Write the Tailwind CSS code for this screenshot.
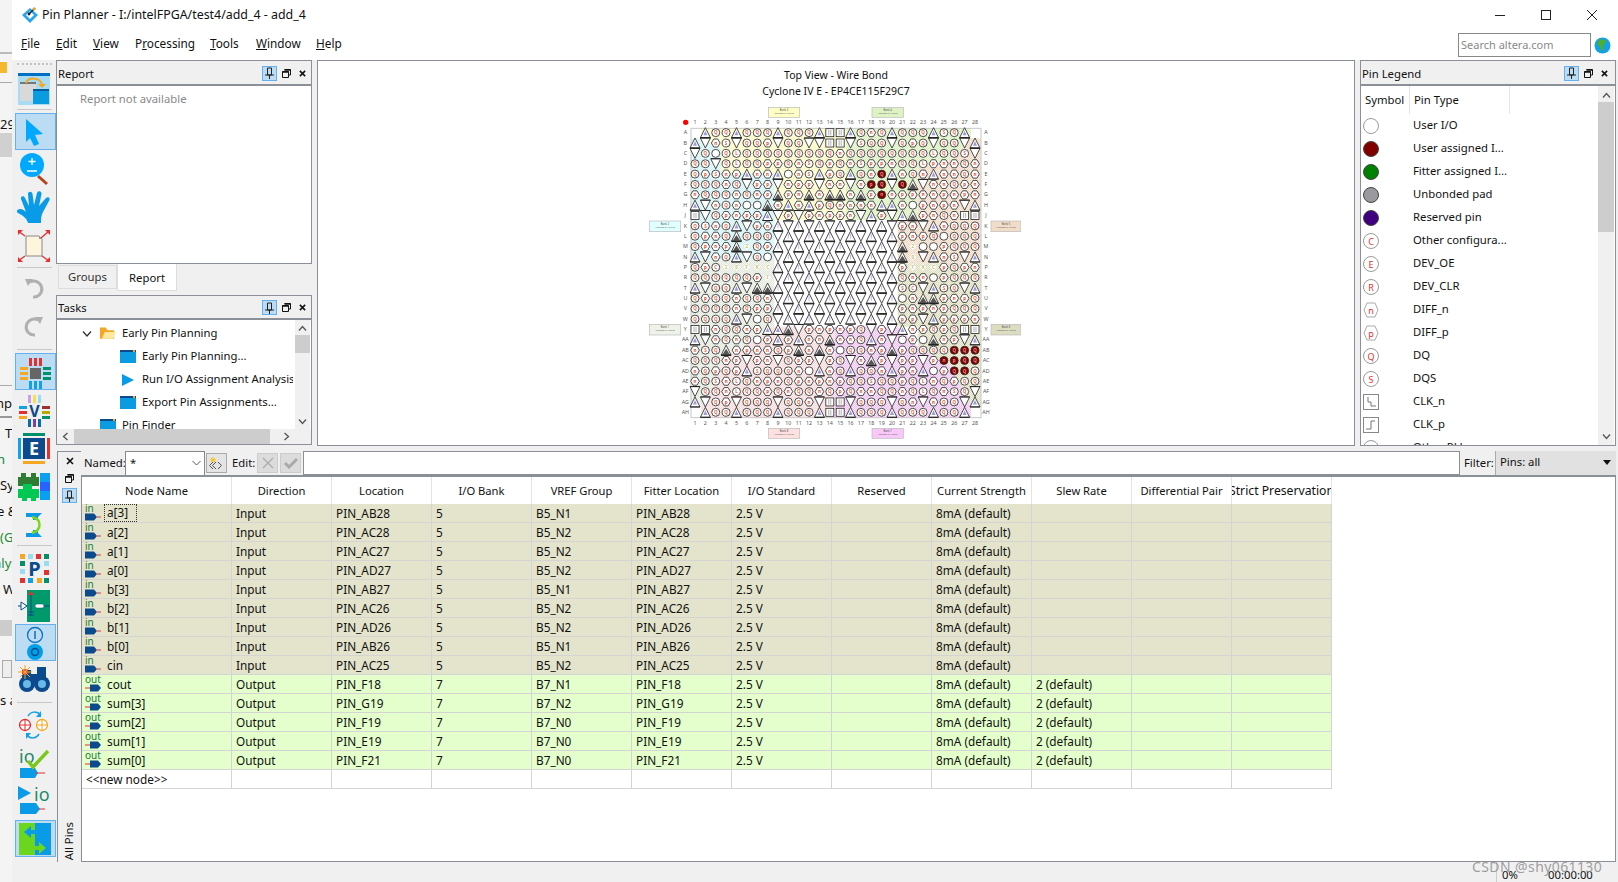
<!DOCTYPE html>
<html lang="en">
<head>
<meta charset="UTF-8">
<title>Pin Planner</title>
<script src="https://cdn.jsdelivr.net/npm/@tailwindcss/browser@4"></script>
</head>
<body class="w-[1618px] h-[882px] overflow-hidden bg-[#f0f0f0] text-[11.3px] text-[#111] font-['Noto_Sans',sans-serif]">
<div class="flex h-[882px]">

  <!-- window behind, only a sliver shows -->
  <div class="relative w-[12px] h-full overflow-hidden bg-[#f4f4f4] text-[13px] whitespace-nowrap">
    <div class="absolute left-0 top-[52px] w-full h-[2px] bg-[#bbb]"></div>
    <div class="absolute left-[-5px] top-[62px] w-[12px] h-[11px] bg-[#f5b82e]"></div>
    <div class="absolute left-0 top-[82px] w-full h-[1px] bg-[#aaa]"></div>
    <div class="absolute left-0 top-[115px]">29</div>
    <div class="absolute left-0 top-[133px] w-full h-[24px] bg-[#d0d0d0]"></div>
    <div class="absolute left-0 top-[385px] w-full h-[1px] bg-[#aaa]"></div>
    <div class="absolute left-[-4px] top-[394px]">np</div>
    <div class="absolute left-0 top-[416px] w-full h-[2px] bg-[#999]"></div>
    <div class="absolute left-[5px] top-[424px]">T</div>
    <div class="absolute left-[-3px] top-[450px] text-[#0a8a3a]">n</div>
    <div class="absolute left-0 top-[476px]">Sy</div>
    <div class="absolute left-[-3px] top-[502px]">e &amp;</div>
    <div class="absolute left-0 top-[528px] text-[#1a8a3a]">(G</div>
    <div class="absolute left-[-6px] top-[554px] text-[#1a8a3a]">alys</div>
    <div class="absolute left-[3px] top-[580px]">W</div>
    <div class="absolute left-0 top-[620px] w-full h-[16px] bg-[#ccc]"></div>
    <div class="absolute left-[2px] top-[660px] w-[10px] h-[18px] border border-[#aaa] bg-[#eee]"></div>
    <div class="absolute left-0 top-[691px]">s a</div>
  </div>

  <div class="flex-1 flex flex-col shadow-[-1px_0_2px_rgba(0,0,0,0.12)]">
    <!-- title bar -->
    <div class="h-[30px] bg-white flex items-center">
      <svg class="ml-[9px] w-[18px] h-[18px]" viewBox="0 0 18 18"><path d="M9 2 L17 9 L9 17 L1 9 Z" fill="#2aa5e8"/><path d="M5 9 L9 5 L13 9 L9 13 Z" fill="#fff"/><path d="M8 8 L14 2" stroke="#123" stroke-width="1.5"/><circle cx="13" cy="3" r="1.6" fill="#e8a030"/><circle cx="8" cy="8" r="1.4" fill="#123"/></svg>
      <span class="ml-[3px] text-[12.4px]">Pin Planner - I:/intelFPGA/test4/add_4 - add_4</span>
      <div class="ml-auto flex items-center mr-[21px] gap-[36px]">
        <svg class="w-[10px] h-[10px]" viewBox="0 0 10 10"><path d="M0 5.5H10" stroke="#222"/></svg>
        <svg class="w-[10px] h-[10px]" viewBox="0 0 10 10"><rect x=".5" y=".5" width="9" height="9" fill="none" stroke="#222"/></svg>
        <svg class="w-[10px] h-[10px]" viewBox="0 0 10 10"><path d="M0 0L10 10M10 0L0 10" stroke="#222"/></svg>
      </div>
    </div>
    <!-- menu bar -->
    <div class="h-[30px] bg-white flex items-center text-[11.8px]">
      <div class="flex pl-[9px] flex-1 pb-[2px]">
        <span class="w-[35px]"><span class="underline">F</span>ile</span>
        <span class="w-[37px]"><span class="underline">E</span>dit</span>
        <span class="w-[42px]"><span class="underline">V</span>iew</span>
        <span class="w-[75px]">P<span class="underline">r</span>ocessing</span>
        <span class="w-[46px]"><span class="underline">T</span>ools</span>
        <span class="w-[60px]"><span class="underline">W</span>indow</span>
        <span><span class="underline">H</span>elp</span>
      </div>
      <div class="w-[133px] h-[24px] border border-[#888] bg-white text-[#8a8a8a] text-[11px] flex items-center pl-[2px]">Search altera.com</div>
      <svg class="ml-[3px] mr-[7px] w-[17px] h-[17px]" viewBox="0 0 17 17"><circle cx="8.5" cy="8.5" r="8" fill="#12a0e8"/><path d="M5 2 L11 3 L12 6 L9 8 L10 11 L8 15 L6 10 L3 7 Z" fill="#4caf32"/></svg>
    </div>

    <div class="flex-1 flex min-h-0">
      <!-- toolbar -->
      <div class="w-[44px] flex flex-col pl-[3px]" id="toolbar">
        <div class="mt-[3px] ml-[2px] w-[35px] h-[3px] border-t-2 border-dotted border-[#c4c4c4]"></div>
        <div class="mt-[4px] h-[36px]"><svg class="w-[39px] h-[36px]" viewBox="0 0 39 36"><rect x="3" y="3" width="32" height="32" fill="#a8dcf4"/><rect x="3" y="3" width="32" height="3" fill="#0071c5"/><rect x="5" y="12" width="16" height="19" fill="#d9d9d9"/><rect x="5" y="12" width="16" height="2" fill="#777"/><rect x="18" y="19" width="16" height="15" fill="#0a9be0"/><rect x="18" y="19" width="16" height="2" fill="#0b5a9c"/><path d="M11 13C13 7 24 7 27 14" fill="none" stroke="#f5a623" stroke-width="2"/><path d="M23 14H31L27 18Z" fill="#f5a623"/></svg></div>
        <div class="mt-[3px] mb-[3px] ml-[2px] w-[35px] h-[1px] bg-[#c8c8c8]"></div>
        <div class="h-[37px] bg-[#bcdcf4] border border-[#66b0f0]"><svg class="w-[37px] h-[35px]" viewBox="0 0 37 35"><path d="M10 5 L27 20 L19 21 L23 30 L18 32 L14 24 L10 28 Z" fill="#00a8ff"/></svg></div>
        <div class="mt-[2px] h-[36px]"><svg class="w-[39px] h-[36px]" viewBox="0 0 39 36"><path d="M23 24L32 32" stroke="#b5451b" stroke-width="3"/><circle cx="17" cy="13" r="12" fill="#00a8ff"/><path d="M17 6V13M13.500 9.500H20.500M12 19H22" stroke="#fff" stroke-width="1.300"/></svg></div>
        <div class="mt-[1px] h-[36px]"><svg class="w-[39px] h-[36px]" viewBox="0 0 39 36"><path d="M13 34C12 30 9 27 3 24C1 23 2 20 5 20C8 20 10 22 11 23L6 10C5 7 9 6 10 9L14 17L13 5C13 2 17 2 17.500 5L19 16L22 4C23 1 27 2 26.500 5L24 17L31 9C33 7 36 9 34 12L28 23C26 27 26 30 26 34Z" fill="#0a9be8"/></svg></div>
        <div class="mt-[2px] h-[36px]"><svg class="w-[39px] h-[36px]" viewBox="0 0 39 36"><path d="M11 9H24L27 12V29H11Z" fill="#fdf6dc" stroke="#888"/><path d="M24 9V12H27Z" fill="#999"/><g stroke="#e53030" stroke-width="1.300"><path d="M3 4L10 9M34 4L26 11M3 34L10 29M34 34L27 29"/></g><g fill="#e53030"><path d="M3 3H8L3 8Z"/><path d="M35 3H30L35 8Z"/><path d="M3 35H8L3 30Z"/><path d="M35 35H30L35 30Z"/></g></svg></div>
        <div class="mt-[4px] mb-[3px] ml-[2px] w-[35px] h-[1px] bg-[#c8c8c8]"></div>
        <div class="h-[34px]"><svg class="w-[39px] h-[34px]" viewBox="0 0 39 34"><path d="M15 11A8 8 0 1 1 18 26" fill="none" stroke="#b0b0b0" stroke-width="3"/><path d="M10 8H18L13 15Z" fill="#b0b0b0"/></svg></div>
        <div class="mt-[4px] h-[34px]"><svg class="w-[39px] h-[34px]" viewBox="0 0 39 34"><path d="M23 11A8 8 0 1 0 20 26" fill="none" stroke="#b0b0b0" stroke-width="3"/><path d="M28 8H20L25 15Z" fill="#b0b0b0"/></svg></div>
        <div class="mt-[6px] mb-[3px] ml-[2px] w-[35px] h-[1px] bg-[#c8c8c8]"></div>
        <div class="h-[37px] bg-[#bcdcf4] border border-[#66b0f0]"><svg class="w-[37px] h-[35px]" viewBox="0 0 37 35"><rect x="14" y="14" width="11" height="11" fill="#666"/><g fill="#e53030"><rect x="13" y="4" width="3" height="8"/><rect x="18" y="4" width="3" height="8"/><rect x="23" y="4" width="3" height="8"/></g><g fill="#12a0e8"><rect x="13" y="27" width="3" height="8"/><rect x="18" y="27" width="3" height="8"/><rect x="23" y="27" width="3" height="8"/></g><g fill="#f5a623"><rect x="4" y="13" width="8" height="3"/><rect x="4" y="18" width="8" height="3"/><rect x="4" y="23" width="8" height="3"/></g><g fill="#00906a"><rect x="27" y="13" width="8" height="3"/><rect x="27" y="18" width="8" height="3"/><rect x="27" y="23" width="8" height="3"/></g></svg></div>
        <div class="mt-[2px] h-[36px]"><svg class="w-[39px] h-[36px]" viewBox="0 0 39 36"><rect x="13" y="3" width="3" height="8" fill="#c9a0e8"/><rect x="18" y="3" width="3" height="8" fill="#f5e050"/><rect x="23" y="3" width="3" height="8" fill="#9adcf4"/><rect x="4" y="14" width="8" height="3" fill="#12a0e8"/><rect x="4" y="19" width="8" height="3" fill="#e53030"/><rect x="4" y="24" width="8" height="3" fill="#f5a623"/><rect x="27" y="14" width="8" height="3" fill="#a03030"/><rect x="27" y="19" width="8" height="3" fill="#b8a800"/><rect x="27" y="24" width="8" height="3" fill="#00906a"/><rect x="13" y="27" width="3" height="8" fill="#0a6ab0"/><rect x="18" y="27" width="3" height="8" fill="#8040a0"/><rect x="23" y="27" width="3" height="8" fill="#0a6ab0"/><text x="19.500" y="25" text-anchor="middle" font-size="16" font-weight="700" fill="#0b4a8c" font-family="Noto Sans">V</text></svg></div>
        <div class="mt-[3px] h-[36px]"><svg class="w-[39px] h-[36px]" viewBox="0 0 39 36"><rect x="8" y="2" width="22" height="3" fill="#00906a"/><rect x="3" y="7" width="3" height="21" fill="#12a0e8"/><rect x="8" y="7" width="22" height="21" fill="#0b4a8c"/><rect x="32" y="7" width="3" height="21" fill="#e53030"/><rect x="8" y="30" width="22" height="3" fill="#f5a623"/><text x="19" y="24" text-anchor="middle" font-size="18" font-weight="700" fill="#fff" font-family="Noto Sans">E</text></svg></div>
        <div class="mt-[2px] h-[36px]"><svg class="w-[39px] h-[36px]" viewBox="0 0 39 36"><rect x="3" y="8" width="21" height="9" fill="#2e7d32"/><rect x="6" y="4" width="5" height="5" fill="#2e7d32"/><rect x="16" y="4" width="5" height="5" fill="#2e7d32"/><rect x="3" y="20" width="21" height="9" fill="#00c853"/><rect x="8" y="15" width="9" height="6" fill="#00c853"/><rect x="7" y="28" width="5" height="4" fill="#00c853"/><rect x="16" y="28" width="5" height="4" fill="#00c853"/><rect x="25" y="4" width="10" height="27" fill="#0aa0f0"/><rect x="25" y="13" width="10" height="9" fill="#2962ff"/></svg></div>
        <div class="mt-[1px] h-[36px]"><svg class="w-[39px] h-[36px]" viewBox="0 0 39 36"><path d="M11 7H27L23 11V14H18V11H11ZM11 27H18V24H23V27L27 31H11Z" fill="#0a9be8"/><path d="M17 11C27 13 27 24 17 27" fill="none" stroke="#7ad61e" stroke-width="2.500"/></svg></div>
        <div class="mt-[3px] mb-[5px] ml-[2px] w-[35px] h-[1px] bg-[#c8c8c8]"></div>
        <div class="h-[36px]"><svg class="w-[39px] h-[36px]" viewBox="0 0 39 36"><g fill="#f5a623"><rect x="5" y="3" width="5" height="5"/><rect x="22" y="27" width="5" height="5"/></g><g fill="#9adcf4"><rect x="13" y="3" width="5" height="5"/><rect x="5" y="18" width="5" height="5"/><rect x="29" y="10" width="5" height="5"/></g><g fill="#e53030"><rect x="21" y="3" width="5" height="5"/><rect x="29" y="19" width="5" height="5"/><rect x="5" y="27" width="5" height="5"/></g><g fill="#00906a"><rect x="29" y="3" width="5" height="5"/><rect x="5" y="10" width="5" height="5"/><rect x="29" y="27" width="5" height="5"/></g><rect x="13" y="27" width="5" height="5" fill="#12a0e8"/><text x="19.500" y="25" text-anchor="middle" font-size="20" font-weight="700" fill="#0b4a8c" font-family="Noto Sans">P</text></svg></div>
        <div class="mt-[1px] h-[36px]"><svg class="w-[39px] h-[36px]" viewBox="0 0 39 36"><rect x="12" y="2" width="23" height="32" fill="#009a6a"/><path d="M3 18H12M20 18H35" stroke="#0b4a8c"/><path d="M6 14V22L12 18Z" fill="#fff" stroke="#0b4a8c"/><rect x="20" y="16" width="9" height="4" rx="2" fill="#fff" stroke="#0b4a8c" stroke-width=".5"/><path d="M16 4V28M13 24H19M13 27H19" stroke="#0b4a8c"/><path d="M13 7L16 3L19 7Z" fill="#e53030"/></svg></div>
        <div class="h-[37px] bg-[#bcdcf4] border border-[#66b0f0]"><svg class="w-[37px] h-[35px]" viewBox="0 0 37 35"><circle cx="19" cy="10" r="7.500" fill="none" stroke="#0a70c0" stroke-width="1.300"/><path d="M19 6V14" stroke="#0a70c0" stroke-width="1.500"/><circle cx="19" cy="27" r="8" fill="#00a0e8"/><circle cx="19" cy="27" r="3.500" fill="none" stroke="#0b4a8c" stroke-width="1.500"/></svg></div>
        <div class="mt-[1px] h-[36px]"><svg class="w-[39px] h-[36px]" viewBox="0 0 39 36"><path d="M7 8H16V20H7ZM22 5H31V20H22Z" fill="#0b4a8c"/><rect x="15" y="12" width="8" height="8" fill="#0b4a8c"/><circle cx="12" cy="22" r="8" fill="#0b4a8c"/><circle cx="27" cy="22" r="8" fill="#0b4a8c"/><circle cx="12" cy="22" r="4" fill="#6ab8e8"/><circle cx="27" cy="22" r="4" fill="#6ab8e8"/><circle cx="10" cy="10" r="3" fill="#e53030"/><path d="M10 3V17M3 10H17M5 5L15 15M15 5L5 15" stroke="#f5a623" stroke-width="1"/></svg></div>
        <div class="mt-[4px] mb-[3px] ml-[2px] w-[35px] h-[1px] bg-[#c8c8c8]"></div>
        <div class="h-[36px]"><svg class="w-[39px] h-[36px]" viewBox="0 0 39 36"><circle cx="10" cy="19" r="5.500" fill="#fff" stroke="#e53030" stroke-width="1.300"/><path d="M4.500 19H15.500M10 13.500V24.500" stroke="#e53030"/><circle cx="27" cy="19" r="5.500" fill="#fff" stroke="#f5a623" stroke-width="1.300"/><path d="M21.500 19H32.500M27 13.500V24.500" stroke="#f5a623"/><path d="M13 10C16 5 22 5 26 9" fill="none" stroke="#12a0e8" stroke-width="1.500"/><path d="M24 28C21 33 15 33 12 29" fill="none" stroke="#12a0e8" stroke-width="1.500"/><path d="M26 5V11H21Z" fill="#12a0e8"/><path d="M11 33V27H16Z" fill="#12a0e8"/></svg></div>
        <div class="mt-[3px] h-[36px]"><svg class="w-[39px] h-[36px]" viewBox="0 0 39 36"><text x="4" y="18" font-size="18" fill="#1f8a6a" font-family="Noto Sans">io</text><path d="M5 23H20L23 28L20 33H5Z" fill="#0a9be8"/><path d="M21 28H30" stroke="#e53030"/><path d="M13 16L18 22L33 6" fill="none" stroke="#7ac81e" stroke-width="3.500"/></svg></div>
        <div class="mt-[2px] h-[36px]"><svg class="w-[39px] h-[36px]" viewBox="0 0 39 36"><path d="M3 3L16 10L3 17Z" fill="#0a9be8"/><text x="19" y="18" font-size="18" fill="#1f8a6a" font-family="Noto Sans">io</text><path d="M5 20H21L25 26L21 31H5Z" fill="#0a9be8"/><path d="M24 26H30" stroke="#e53030"/></svg></div>
        <div class="mt-[1px] h-[37px] bg-[#bcdcf4] border border-[#66b0f0]"><svg class="w-[37px] h-[35px]" viewBox="0 0 37 35"><rect x="3" y="2" width="16" height="32" fill="#6ad61e"/><rect x="19" y="2" width="16" height="32" fill="#0a9be8"/><path d="M8 11L15 5V9H21V13H15V17Z" fill="#0a9be8"/><path d="M30 27L23 21V25H17V29H23V33Z" fill="#6ad61e"/></svg></div>
      </div>

      <div class="flex-1 flex flex-col min-w-0">
        <!-- upper docks -->
        <div class="h-[386px] flex">
          <div class="w-[256px] flex flex-col">
            <div class="h-[204px] border border-[#8a8f98] flex flex-col">
              <div class="mt-[1px] h-[22px] flex items-center pl-[1px]"><span class="pt-[2px]">Report</span><div data-dock class="ml-auto mr-[5px]"></div></div>
              <div class="flex-1 bg-white border-t-2 border-[#8a8f98] pl-[23px] pt-[5px] text-[#8a8a8a]">Report not available</div>
            </div>
            <div class="h-[27px] flex items-start pl-[2px]">
              <div class="w-[59px] h-[24px] mt-[1px] pt-[1px] border border-[#ddd] flex items-center justify-center text-[#333]">Groups</div>
              <div class="w-[60px] h-[27px] pt-[2px] bg-white border border-[#ddd] border-t-0 flex items-center justify-center">Report</div>
            </div>
            <div class="mt-[4px] h-[150px] border border-[#8a8f98] flex flex-col">
              <div class="mt-[1px] h-[21px] flex items-center pl-[1px]"><span class="pt-[2px]">Tasks</span><div data-dock class="ml-auto mr-[5px]"></div></div>
              <div class="flex-1 min-h-0 bg-white border-t-2 border-[#8a8f98] flex flex-col">
                <div class="flex-1 min-h-0 flex">
                  <div class="w-[236px] mr-[2px] overflow-hidden whitespace-nowrap pt-[2px]">
                    <div class="h-[23px] flex items-center pl-[25px]"><svg class="shrink-0 w-[10px] h-[8px]" viewBox="0 0 10 8"><path d="M1 1.500L5 6L9 1.500" fill="none" stroke="#333" stroke-width="1.300"/></svg><svg class="shrink-0 ml-[8px] w-[16px] h-[15px]" viewBox="0 0 17 15"><path d="M0 1H6L8 4H15V13H0Z" fill="#f5a623"/><path d="M2 13L5 6H17L14 13Z" fill="#fdeaa0"/></svg><span class="ml-[6px]">Early Pin Planning</span></div>
                    <div class="h-[23px] flex items-center pl-[63px]"><svg class="shrink-0 w-[16px] h-[13px]" viewBox="0 0 16 13"><rect width="16" height="13" fill="#0a9be0"/><rect width="16" height="2" fill="#0b4a8c"/><rect x="13" width="2" height="2" fill="#f5a623"/></svg><span class="ml-[6px]">Early Pin Planning...</span></div>
                    <div class="h-[23px] flex items-center pl-[65px]"><svg class="shrink-0 w-[12px] h-[12px]" viewBox="0 0 12 12"><path d="M0 0L12 6L0 12Z" fill="#0a9be8"/></svg><span class="ml-[8px]">Run I/O Assignment Analysis</span></div>
                    <div class="h-[23px] flex items-center pl-[63px]"><svg class="shrink-0 w-[16px] h-[13px]" viewBox="0 0 16 13"><rect width="16" height="13" fill="#0a9be0"/><rect width="16" height="2" fill="#0b4a8c"/><rect x="13" width="2" height="2" fill="#f5a623"/></svg><span class="ml-[6px]">Export Pin Assignments...</span></div>
                    <div class="h-[23px] flex items-center pl-[43px]"><svg class="shrink-0 w-[16px] h-[13px]" viewBox="0 0 16 13"><rect width="16" height="13" fill="#0a9be0"/><rect width="16" height="2" fill="#0b4a8c"/><rect x="13" width="2" height="2" fill="#f5a623"/></svg><span class="ml-[6px]">Pin Finder</span></div>
                  </div>
                  <div class="w-[15px] bg-[#f0f0f0] flex flex-col items-center">
                    <svg class="mt-[5px] w-[9px] h-[7px]" viewBox="0 0 9 7"><path d="M1 5.500L4.500 1.500L8 5.500" fill="none" stroke="#555" stroke-width="1.300"/></svg>
                    <div class="mt-[3px] w-full h-[18px] bg-[#cdcdcd]"></div>
                    <svg class="mt-auto mb-[4px] w-[9px] h-[7px]" viewBox="0 0 9 7"><path d="M1 1.500L4.500 5.500L8 1.500" fill="none" stroke="#555" stroke-width="1.300"/></svg>
                  </div>
                </div>
                <div class="h-[15px] bg-[#f0f0f0] flex items-center">
                  <svg class="ml-[5px] w-[7px] h-[9px]" viewBox="0 0 7 9"><path d="M5.500 1L1.500 4.500L5.500 8" fill="none" stroke="#555" stroke-width="1.300"/></svg>
                  <div class="ml-[5px] w-[196px] h-full bg-[#cdcdcd]"></div>
                  <svg class="ml-[13px] w-[7px] h-[9px]" viewBox="0 0 7 9"><path d="M1.500 1L5.500 4.500L1.500 8" fill="none" stroke="#555" stroke-width="1.300"/></svg>
                </div>
              </div>
            </div>
          </div>

          <!-- chip view -->
          <div class="relative ml-[5px] w-[1038px] border border-[#8a8f98] bg-white overflow-hidden">
            <div class="pt-[6px] text-center text-[10.5px] leading-[16px]">Top View - Wire Bond<br>Cyclone IV E - EP4CE115F29C7</div>
            <svg id="pinmap" class="absolute left-[323px] top-[-1px] w-[380px] h-[390px]" viewBox="0 0 1140 1170"></svg>
          </div>

          <!-- legend -->
          <div class="ml-[5px] w-[256px] border border-[#8a8f98] flex flex-col">
            <div class="mt-[1px] h-[22px] flex items-center pl-[1px]"><span class="pt-[2px]">Pin Legend</span><div data-dock class="ml-auto mr-[7px]"></div></div>
            <div class="flex-1 min-h-0 bg-white border-t-2 border-[#8a8f98] flex">
              <div class="flex-1 overflow-hidden">
                <div class="flex h-[28px] items-center whitespace-nowrap">
                  <div class="w-[49px] pl-[4px] h-full flex items-center border-r border-[#e4e4e4]">Symbol</div>
                  <div class="w-[100px] pl-[4px] h-full flex items-center border-r border-[#e4e4e4]">Pin Type</div>
                </div>
                <div id="legend"></div>
              </div>
              <div class="w-[16px] mr-[1px] bg-[#f0f0f0] flex flex-col items-center">
                <svg class="mt-[6px] w-[9px] h-[7px]" viewBox="0 0 9 7"><path d="M1 5.500L4.500 1.500L8 5.500" fill="none" stroke="#555" stroke-width="1.300"/></svg>
                <div class="mt-[3px] w-full h-[130px] bg-[#cdcdcd]"></div>
                <svg class="mt-auto mb-[5px] w-[9px] h-[7px]" viewBox="0 0 9 7"><path d="M1 1.500L4.500 5.500L8 1.500" fill="none" stroke="#555" stroke-width="1.300"/></svg>
              </div>
            </div>
          </div>
        </div>

        <!-- all pins -->
        <div class="mt-[5px] h-[411px] flex">
          <div class="ml-[1px] w-[24px] border-l border-t border-[#8a8f98] flex flex-col items-center">
            <svg class="mt-[5px] w-[8px] h-[8px]" viewBox="0 0 8 8"><path d="M1 1L7 7M7 1L1 7" stroke="#111" stroke-width="1.600"/></svg>
            <svg class="mt-[9px] w-[9px] h-[9px]" viewBox="0 0 9 9"><path d="M2.500.5H8.500V6H6.500M.5 2.500H6.500V8.500H.5Z" fill="none" stroke="#111"/><path d="M2.500 1H8.500M.5 3H6.500" stroke="#111" stroke-width="1.500"/></svg>
            <div class="mt-[5px] w-[15px] h-[15px] bg-[#bcdcf4] border border-[#66b0f0] flex items-center justify-center"><svg class="w-[9px] h-[12px]" viewBox="0 0 9 12"><path d="M2.500 1H6.500V8H2.500ZM0 8H9M4.500 8V12" fill="none" stroke="#222"/></svg></div>
            <div class="mt-auto mb-[2px] [writing-mode:vertical-rl] rotate-180 whitespace-nowrap">All Pins</div>
          </div>
          <div class="flex-1 flex flex-col min-w-0">
            <div class="h-[24px] flex items-center">
              <span class="ml-[3px] w-[41px]">Named:</span>
              <div class="w-[80px] h-[25px] bg-white border border-[#888] flex items-center pl-[4px]"><span>*</span><svg class="ml-auto mr-[3px] w-[9px] h-[6px]" viewBox="0 0 9 6"><path d="M.5 1L4.500 5L8.500 1" fill="none" stroke="#555"/></svg></div>
              <div class="ml-[1px] w-[21px] h-[20px] bg-[#e4e4e4] border border-[#aaa] flex items-center justify-center"><svg class="w-[17px] h-[14px]" viewBox="0 0 17 14"><path d="M5 1V7M2 4H8M3 2L7 6M7 2L3 6" stroke="#f5c518"/><path d="M5 6L1.500 9.500L5 13M8 6L4.500 9.500L8 13M10 6L13.500 9.500L10 13" fill="none" stroke="#555"/></svg></div>
              <span class="ml-[5px] w-[25px]">Edit:</span>
              <div class="w-[21px] h-[20px] bg-[#dcdcdc] border border-[#ccc] flex items-center justify-center"><svg class="w-[12px] h-[12px]" viewBox="0 0 12 12"><path d="M1 1L11 11M11 1L1 11" stroke="#aaa" stroke-width="1.200"/></svg></div>
              <div class="ml-[2px] w-[21px] h-[20px] bg-[#dcdcdc] border border-[#ccc] flex items-center justify-center"><svg class="w-[14px] h-[12px]" viewBox="0 0 14 12"><path d="M1 6L5 10L13 2" fill="none" stroke="#aaa" stroke-width="3"/></svg></div>
              <div class="ml-[2px] flex-1 h-[25px] bg-white border-l border-t border-r border-[#8a8f98] border-b-2"></div>
              <span class="ml-[4px] w-[31px]">Filter:</span>
              <div class="w-[121px] h-[25px] bg-[#e1e1e1] border-l border-b border-[#aaa] flex items-center pl-[4px] mr-[2px]"><span>Pins: all</span><svg class="ml-auto mr-[5px] w-[8px] h-[5px]" viewBox="0 0 8 5"><path d="M0 0H8L4 5Z" fill="#111"/></svg></div>
            </div>
            <div class="flex-1 min-h-0 bg-white border-t-2 border-b border-r border-l border-[#8a8f98] mr-[2px]">
              <div id="pins" class="w-[1250px]"></div>
            </div>
          </div>
        </div>

        <!-- status bar -->
        <div class="h-[20px] flex items-center">
          <div class="ml-auto h-full w-[122px] border-l border-[#ccc] flex items-end leading-[14px]">
            <span class="ml-[5px] w-[46px]">0%</span><span>00:00:00</span>
          </div>
        </div>
      </div>
    </div>
  </div>
</div>
<div class="absolute left-[1472px] top-[856px] text-[14px] tracking-[0.4px] text-[#888]/80 whitespace-nowrap">CSDN @shy061130</div>

<script>
// dock buttons used by the three panel headers
document.querySelectorAll('[data-dock]').forEach(function(el) {
  el.innerHTML = '<div class="flex items-center">' +
    '<div class="w-[15px] h-[15px] bg-[#bcdcf4] border border-[#66b0f0] flex items-center justify-center"><svg class="w-[9px] h-[12px]" viewBox="0 0 9 12"><path d="M2.500 1H6.500V8H2.500ZM0 8H9M4.500 8V12" fill="none" stroke="#222"/></svg></div>' +
    '<svg class="ml-[5px] w-[9px] h-[9px]" viewBox="0 0 9 9"><path d="M2.500.5H8.500V6H6.500M.5 2.500H6.500V8.500H.5Z" fill="none" stroke="#111"/><path d="M2.500 1H8.500M.5 3H6.500" stroke="#111" stroke-width="1.500"/></svg>' +
    '<svg class="ml-[8px] w-[7px] h-[7px]" viewBox="0 0 8 8"><path d="M1 1L7 7M7 1L1 7" stroke="#111" stroke-width="1.800"/></svg></div>';
});

// legend rows
var legend = [
  ['c', '#fff', '', 'User I/O'], ['c', '#800000', '', 'User assigned I...'], ['c', '#008000', '', 'Fitter assigned I...'],
  ['c', '#9a9a9e', '', 'Unbonded pad'], ['c', '#400080', '', 'Reserved pin'], ['c', '#fff', 'C', 'Other configura...'],
  ['c', '#fff', 'E', 'DEV_OE'], ['c', '#fff', 'R', 'DEV_CLR'], ['h', '#fff', 'n', 'DIFF_n'], ['h', '#fff', 'p', 'DIFF_p'],
  ['c', '#fff', 'Q', 'DQ'], ['c', '#fff', 'S', 'DQS'], ['n', '', '', 'CLK_n'], ['p', '', '', 'CLK_p'], ['c', '#fff', 'I', 'Other PLL']
];
document.getElementById('legend').innerHTML = legend.map(function(l) {
  var ic = '';
  var ring = l[1] === '#fff' ? '#9a9a9a' : '#444';
  if (l[0] === 'c') ic = '<circle cx="8" cy="8" r="7.500" fill="' + l[1] + '" stroke="' + ring + '"/>';
  if (l[0] === 'h') ic = '<path d="M4 1H12L15 8L12 15H4L1 8Z" fill="#fff" stroke="#aaa"/>';
  if (l[0] === 'n') ic = '<rect x=".5" y=".5" width="15" height="15" fill="#fff" stroke="#888"/><path d="M5 3V8H8V12H13" fill="none" stroke="#777"/>';
  if (l[0] === 'p') ic = '<rect x=".5" y=".5" width="15" height="15" fill="#fff" stroke="#888"/><path d="M3 12H8V4H12" fill="none" stroke="#777"/>';
  var t = l[2] ? '<text x="8" y="11.500" text-anchor="middle" font-size="9" font-family="Noto Sans" fill="#e03030">' + l[2] + '</text>' : '';
  return '<div class="h-[23px] flex items-center"><svg class="ml-[2px] w-[16px] h-[16px] shrink-0" viewBox="0 0 16 16">' + ic + t + '</svg><span class="ml-[34px] whitespace-nowrap">' + l[3] + '</span></div>';
}).join('');

// all pins table
var cols = ['Node Name', 'Direction', 'Location', 'I/O Bank', 'VREF Group', 'Fitter Location', 'I/O Standard', 'Reserved', 'Current Strength', 'Slew Rate', 'Differential Pair', 'Strict Preservation'];
var pins = [
  ['a[3]', 'AB28', 'B5_N1'], ['a[2]', 'AC28', 'B5_N2'], ['a[1]', 'AC27', 'B5_N2'], ['a[0]', 'AD27', 'B5_N2'],
  ['b[3]', 'AB27', 'B5_N1'], ['b[2]', 'AC26', 'B5_N2'], ['b[1]', 'AD26', 'B5_N2'], ['b[0]', 'AB26', 'B5_N1'], ['cin', 'AC25', 'B5_N2'],
  ['cout', 'F18', 'B7_N1'], ['sum[3]', 'G19', 'B7_N2'], ['sum[2]', 'F19', 'B7_N0'], ['sum[1]', 'E19', 'B7_N0'], ['sum[0]', 'F21', 'B7_N0']
];
var inIcon = '<svg class="w-[17px] h-[18px] shrink-0" viewBox="0 0 17 18"><text x="0" y="8" font-size="10" fill="#1a7a3a" font-family="Noto Sans">in</text><path d="M0 9.500H9L12 13L9 16.500H0Z" fill="#0b4a8c"/><path d="M12 13H16" stroke="#e53030"/></svg>';
var outIcon = '<svg class="w-[17px] h-[18px] shrink-0" viewBox="0 0 17 18"><text x="0" y="8" font-size="10" fill="#1a7a3a" font-family="Noto Sans">out</text><path d="M5 9.500H13L16 13L13 16.500H5Z" fill="#0b4a8c"/><path d="M0 13H5" stroke="#e53030"/></svg>';
function cell(w, inner) {
  return '<div class="' + w + ' h-full shrink-0 border-r border-b border-[#d4d4d4] flex items-center pl-[4px] pt-[1px] text-[11.8px] overflow-hidden whitespace-nowrap">' + inner + '</div>';
}
// the last header is wider than its column and gets cut on both sides
var html = '<div class="flex h-[27px] bg-white">' + cols.map(function(c, i) {
  return '<div class="' + (i === 0 ? 'w-[150px]' : 'w-[100px]') + ' h-full shrink-0 border-r border-[#e4e4e4] flex items-center justify-center pt-[1px] overflow-hidden whitespace-nowrap ' + (i === 11 ? 'text-[12.2px]' : 'text-[11.2px]') + '"><span class="shrink-0">' + c + '</span></div>';
}).join('') + '</div>';
pins.forEach(function(p, i) {
  var isIn = i < 9;
  var name = i === 0 ? '<span class="ml-[2px] pl-[2px] w-[33px] h-[18px] flex items-center border border-dotted border-[#333]">' + p[0] + '</span>' : '<span class="ml-[5px] pt-[1px]">' + p[0] + '</span>';
  html += '<div class="flex h-[19px] ' + (isIn ? 'bg-[#e4e4cc]' : 'bg-[#e4ffcc]') + '">' +
    '<div class="w-[150px] h-full shrink-0 border-r border-b border-[#d4d4d4] flex items-center pl-[3px] text-[11.8px] overflow-hidden">' + (isIn ? inIcon : outIcon) + name + '</div>' +
    cell('w-[100px]', isIn ? 'Input' : 'Output') + cell('w-[100px]', 'PIN_' + p[1]) + cell('w-[100px]', isIn ? '5' : '7') +
    cell('w-[100px]', p[2]) + cell('w-[100px]', 'PIN_' + p[1]) + cell('w-[100px]', '2.5 V') + cell('w-[100px]', '') +
    cell('w-[100px]', '8mA (default)') + cell('w-[100px]', isIn ? '' : '2 (default)') + cell('w-[100px]', '') + cell('w-[100px]', '') + '</div>';
});
html += '<div class="flex h-[19px] bg-white">' + cell('w-[150px]', '&lt;&lt;new node&gt;&gt;');
for (var k = 0; k < 11; k++) html += cell('w-[100px]', '');
document.getElementById('pins').innerHTML = html + '</div>';

// pin map, coordinates follow the chip drawing at 3 units per pixel
var rowNames = ['A','B','C','D','E','F','G','H','J','K','L','M','N','P','R','T','U','V','W','Y','AA','AB','AC','AD','AE','AF','AG','AH'];
var C = '************';
var rows = [
  '.^QQ^QQQ^QQQ^##^QnQ^QQQ^SQ^.', '^vnSvQQpvQQvv##vSQQvQpQvQQv^', 'vQoQLQQQQQQQQQnQQQQQQQQLQQSv', 'QQvQLQQppQnSQpQnSppnQQLpnnQn',
  'QpSnp^nn^onS^pQ^QnR^nQn^nnQn', 'QQQnQvppvnppvnnvnrRvRAvnnQpn', 'nQQQnQnpApnAnAAnApmnppnnpnpn', '^vnQnooAn^n^pQnnnn^^nopnpnv^',
  '#vQpnpp^vpvpnppnv^pv^ApnQn##', 'QSnQ^vpn' + C + 'pnv^nQQQ', 'QpnQAQQQ' + C + 'pnpQoQQQ', 'QpnpAyQp' + C + 'AyoopQQQ',
  '^vnQ^vQo' + C + 'Ayv^nSv^', 'QpCyyyyy' + C + 'pyyypQpn', 'QQQQQQpy' + C + 'QnnopQQQ', '^vQQ^vAA' + C + 'SCv^SQv^',
  'QpQQnQQn' + C + 'onAApnpQ', 'QQQQnQpp' + C + 'pnpnpQQQ', 'QQQQ^voQ' + C + 'ppv^pppn', '##nQQnp^^AvpnpnpQvpv^npQpQ##',
  '^vnQnQop^p^nnAnnQ^nvopoAnpv^', 'nSQAnpnnQpAnAnoQQnpApQQQQRRR', 'QQQnpvpnvQppvpQvnApvppvpmrRR', 'nQpQp^SQQQno^nQ^QQn^pn^opRRQ',
  'nQSnLQnpnQpnpnpQQSQQpQLnQpQQ', 'vQQnLQQpQnQQnQpQnnQQnQLQnSQv', '^vQpvQQQvQQnv##vQQQvQnvnQQv^', '.^QQ^QQQ^QQQ^##^QQQ^QQQ^QQ^.'
];
var yLetters = ['2', '0', 'F', 'K', 'C', 'I', 'M', 'E'];
var banks = [
  ['#fbf9c0', '180,205 615,205 615,480 400,480 400,340 240,340 240,265 180,235'],
  ['#d6efb8', '615,205 990,205 990,235 930,300 830,320 830,480 615,480'],
  ['#d0f2f4', '150,235 180,235 240,265 240,340 400,340 400,600 150,600'],
  ['#f0d8c0', '990,235 1020,235 1020,610 770,610 770,480 830,480 830,320 930,300'],
  ['#e2e8da', '150,600 400,600 400,800 250,900 180,1040 150,1040'],
  ['#dcdcbc', '770,610 1020,610 1020,1040 990,1040 930,920 830,860 830,800 770,800'],
  ['#f8d8d8', '180,1073 580,1073 580,800 400,800 250,900 180,1040'],
  ['#f2c0f2', '580,800 770,800 830,860 930,920 990,1040 990,1073 580,1073']
];
var boxes = [
  [382, 142, 94, 30, '#fdfdc4', 'Bank 3'], [693, 142, 94, 30, '#dff2c4', 'Bank 4'], [25, 483, 94, 32, '#e0ffff', 'Bank 2'], [1050, 483, 90, 32, '#f0dcc8', 'Bank 5'],
  [25, 793, 94, 32, '#eef2e8', 'Bank 1'], [1050, 793, 90, 32, '#dcdcc0', 'Bank 6'], [382, 1105, 94, 30, '#fde0e0', 'Bank 8'], [693, 1105, 94, 30, '#f8c8f8', 'Bank 7']
];
var s = '<defs><pattern id="dith" width="6" height="6" patternUnits="userSpaceOnUse"><rect width="3" height="3" fill="#fff" fill-opacity=".6"/><rect x="3" y="3" width="3" height="3" fill="#fff" fill-opacity=".6"/></pattern></defs>';
banks.forEach(function(b) { s += '<polygon points="' + b[1] + '" fill="' + b[0] + '"/>'; });
s += '<rect x="150" y="205" width="870" height="868" fill="url(#dith)"/>';
s += '<rect x="150" y="205" width="870" height="868" fill="none" stroke="#c8c8c8" stroke-width="3"/>';
s += '<circle cx="134" cy="187" r="8" fill="#ff0000"/>';
boxes.forEach(function(b) {
  s += '<rect x="' + b[0] + '" y="' + b[1] + '" width="' + b[2] + '" height="' + b[3] + '" fill="' + b[4] + '" stroke="#bbb" stroke-width="2"/>';
  s += '<text x="' + (b[0] + b[2] / 2) + '" y="' + (b[1] + 11) + '" text-anchor="middle" font-size="8" fill="#555" font-family="Noto Sans">' + b[5] + '</text>';
  s += '<text x="' + (b[0] + b[2] / 2) + '" y="' + (b[1] + 21) + '" text-anchor="middle" font-size="6.500" fill="#555" font-family="Noto Sans">Assigned: 0 / 0 pins</text>';
});
function X(c) { return 162 + c * 31.11; }
function Y(r) { return 218 + r * 31.07; }
function lbl(x, y, t) { return '<text x="' + x + '" y="' + y + '" text-anchor="middle" font-size="16" fill="#555" font-family="Noto Sans">' + t + '</text>'; }
for (var c = 0; c < 28; c++) { s += lbl(X(c), 192, c + 1) + lbl(X(c), 1095, c + 1); }
rowNames.forEach(function(n, r) { s += lbl(133, Y(r) + 5, n) + lbl(1035, Y(r) + 5, n); });

var STK = 'stroke="#2a2a2a" stroke-width="2.500"';
function letter(x, y, t, col) { return '<text x="' + x + '" y="' + (y + 5) + '" text-anchor="middle" font-size="13.500" font-weight="700" fill="' + col + '" font-family="Noto Sans">' + t + '</text>'; }
rows.forEach(function(line, r) {
  for (var c = 0; c < 28; c++) {
    var t = line[c], x = X(c), y = Y(r);
    if (t === '*') t = (r + c) % 2 ? 'u' : 'd';
    if (t === '.') continue;
    if ('^uA'.indexOf(t) >= 0) {
      s += '<polygon points="' + x + ',' + (y - 15) + ' ' + (x - 15) + ',' + (y + 15) + ' ' + (x + 15) + ',' + (y + 15) + '" fill="#fff" ' + STK + '/>';
      if (t === '^') s += '<polygon points="' + x + ',' + (y - 6) + ' ' + (x - 6) + ',' + (y + 8) + ' ' + (x + 6) + ',' + (y + 8) + '" fill="#9a9ae0"/>';
      if (t === 'u') s += '<path d="M' + x + ' ' + (y - 7) + 'V' + (y + 7) + '" stroke="#c4a0e8" stroke-width="2.500"/>';
      if (t === 'A') s += '<polygon points="' + x + ',' + (y - 4) + ' ' + (x - 11) + ',' + (y + 13) + ' ' + (x + 11) + ',' + (y + 13) + '" fill="#555"/>';
      s += '<path d="M' + (x - 15) + ' ' + (y + 15) + 'H' + (x + 15) + '" stroke="#222" stroke-width="' + (t === 'A' ? 5 : 3) + '"/>';
    } else if (t === 'v' || t === 'd') {
      s += '<polygon points="' + x + ',' + (y + 15) + ' ' + (x - 15) + ',' + (y - 15) + ' ' + (x + 15) + ',' + (y - 15) + '" fill="#fff" ' + STK + '/>';
      s += '<path d="M' + (x - 15) + ' ' + (y - 15) + 'H' + (x + 15) + '" stroke="#222" stroke-width="3"/>';
    } else if (t === '#') {
      s += '<rect x="' + (x - 12) + '" y="' + (y - 12) + '" width="24" height="24" fill="#fff" ' + STK + '/><path d="M' + (x - 3) + ' ' + (y - 8) + 'V' + (y + 8) + 'M' + (x + 3) + ' ' + (y - 8) + 'V' + (y + 8) + '" stroke="#888" stroke-width="2"/>';
    } else if (t === 'y') {
      s += '<polygon points="' + (x - 11) + ',' + y + ' ' + x + ',' + (y - 12) + ' ' + (x + 11) + ',' + y + ' ' + x + ',' + (y + 12) + '" fill="#fff" stroke="#ddd" stroke-width="1.500"/>' + letter(x, y, yLetters[(r + c) % 8], '#c8c060');
    } else if ('Rrm'.indexOf(t) >= 0) {
      s += '<circle cx="' + x + '" cy="' + y + '" r="12" fill="#800000" ' + STK + '/>' + letter(x, y, t === 'R' ? 'Q' : (t === 'r' ? 'p' : 'n'), '#e89090');
    } else if (t === 'o') {
      s += '<circle cx="' + x + '" cy="' + y + '" r="12" fill="#fff" ' + STK + '/>';
    } else if (t === 'n' || t === 'p') {
      s += '<polygon points="' + (x - 13) + ',' + y + ' ' + (x - 6) + ',' + (y - 12) + ' ' + (x + 6) + ',' + (y - 12) + ' ' + (x + 13) + ',' + y + ' ' + (x + 6) + ',' + (y + 12) + ' ' + (x - 6) + ',' + (y + 12) + '" fill="#fff" ' + STK + '/>' + letter(x, y, t, '#e04830');
    } else {
      s += '<circle cx="' + x + '" cy="' + y + '" r="12" fill="#fff" ' + STK + '/>' + letter(x, y, t, '#e06848');
    }
  }
});
document.getElementById('pinmap').innerHTML = s;
</script>
</body>
</html>
